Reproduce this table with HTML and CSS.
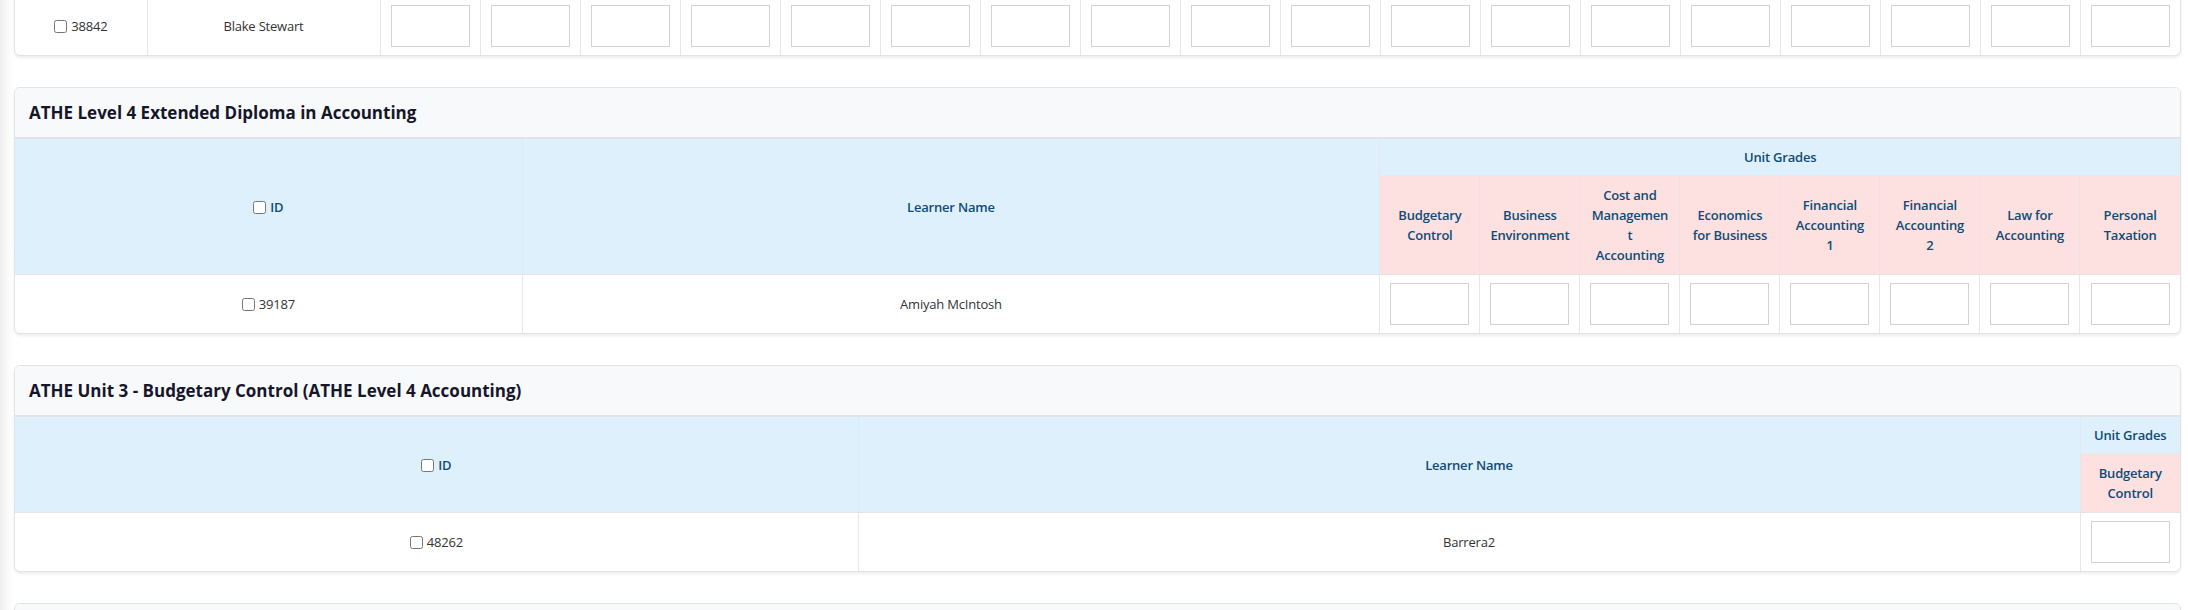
FILE: index.html
```html
<!DOCTYPE html>
<html lang="en">
<head>
<meta charset="utf-8">
<title>Unit Grades</title>
<link rel="stylesheet" href="styles.css">
</head>
<body>
<main class="page">

  <section class="card card-scrolled">
    <table class="grid">
      <colgroup>
        <col class="c-id1"><col class="c-name1">
        <col class="c-unit"><col class="c-unit"><col class="c-unit"><col class="c-unit"><col class="c-unit"><col class="c-unit">
        <col class="c-unit"><col class="c-unit"><col class="c-unit"><col class="c-unit"><col class="c-unit"><col class="c-unit">
        <col class="c-unit"><col class="c-unit"><col class="c-unit"><col class="c-unit"><col class="c-unit"><col class="c-unit">
      </colgroup>
      <tbody>
        <tr>
          <td><label class="idlbl"><input type="checkbox"> 38842</label></td>
          <td>Blake Stewart</td>
          <td class="in"><input class="grade" type="text"></td>
          <td class="in"><input class="grade" type="text"></td>
          <td class="in"><input class="grade" type="text"></td>
          <td class="in"><input class="grade" type="text"></td>
          <td class="in"><input class="grade" type="text"></td>
          <td class="in"><input class="grade" type="text"></td>
          <td class="in"><input class="grade" type="text"></td>
          <td class="in"><input class="grade" type="text"></td>
          <td class="in"><input class="grade" type="text"></td>
          <td class="in"><input class="grade" type="text"></td>
          <td class="in"><input class="grade" type="text"></td>
          <td class="in"><input class="grade" type="text"></td>
          <td class="in"><input class="grade" type="text"></td>
          <td class="in"><input class="grade" type="text"></td>
          <td class="in"><input class="grade" type="text"></td>
          <td class="in"><input class="grade" type="text"></td>
          <td class="in"><input class="grade" type="text"></td>
          <td class="in"><input class="grade" type="text"></td>
        </tr>
      </tbody>
    </table>
  </section>

  <section class="card">
    <header class="card-header">ATHE Level 4 Extended Diploma in Accounting</header>
    <table class="grid">
      <colgroup>
        <col class="c-id2"><col>
        <col class="c-unit"><col class="c-unit"><col class="c-unit"><col class="c-unit">
        <col class="c-unit"><col class="c-unit"><col class="c-unit"><col class="c-unit">
      </colgroup>
      <thead>
        <tr>
          <th rowspan="2"><label class="idlbl"><input type="checkbox"> ID</label></th>
          <th rowspan="2">Learner Name</th>
          <th colspan="8">Unit Grades</th>
        </tr>
        <tr class="units">
          <th>Budgetary<br>Control</th>
          <th>Business<br>Environment</th>
          <th>Cost and<br>Managemen<br>t<br>Accounting</th>
          <th>Economics<br>for Business</th>
          <th>Financial<br>Accounting<br>1</th>
          <th>Financial<br>Accounting<br>2</th>
          <th>Law for<br>Accounting</th>
          <th>Personal<br>Taxation</th>
        </tr>
      </thead>
      <tbody>
        <tr>
          <td><label class="idlbl"><input type="checkbox"> 39187</label></td>
          <td>Amiyah McIntosh</td>
          <td class="in"><input class="grade" type="text"></td>
          <td class="in"><input class="grade" type="text"></td>
          <td class="in"><input class="grade" type="text"></td>
          <td class="in"><input class="grade" type="text"></td>
          <td class="in"><input class="grade" type="text"></td>
          <td class="in"><input class="grade" type="text"></td>
          <td class="in"><input class="grade" type="text"></td>
          <td class="in"><input class="grade" type="text"></td>
        </tr>
      </tbody>
    </table>
  </section>

  <section class="card">
    <header class="card-header">ATHE Unit 3 - Budgetary Control (ATHE Level 4 Accounting)</header>
    <table class="grid">
      <colgroup>
        <col class="c-id3"><col><col class="c-unit">
      </colgroup>
      <thead>
        <tr>
          <th rowspan="2"><label class="idlbl"><input type="checkbox"> ID</label></th>
          <th rowspan="2">Learner Name</th>
          <th>Unit Grades</th>
        </tr>
        <tr class="units">
          <th>Budgetary<br>Control</th>
        </tr>
      </thead>
      <tbody>
        <tr>
          <td><label class="idlbl"><input type="checkbox"> 48262</label></td>
          <td>Barrera2</td>
          <td class="in"><input class="grade" type="text"></td>
        </tr>
      </tbody>
    </table>
  </section>

  <section class="card">
    <header class="card-header"></header>
  </section>

</main>
</body>
</html>
```

FILE: styles.css
```css
* {
  box-sizing: border-box;
}

html, body {
  margin: 0;
  background: #fff;
}

body {
  font-family: "Open Sans", "Noto Sans", sans-serif;
  font-size: 13px;
  letter-spacing: -0.2px;
  color: #333;
  background: linear-gradient(to right, #efefef 0, #fafafa 8px, #fff 14px);
  overflow: hidden;
}

.page {
  padding: 0 7px 0 14px;
}

.card {
  background: #fff;
  border: 1px solid #e2e3e7;
  border-radius: 6px;
  box-shadow: 0 2px 3px rgba(20, 20, 40, 0.07);
  margin-bottom: 31px;
  overflow: hidden;
}

.card-scrolled {
  margin-top: -4px;
  border-top-left-radius: 0;
  border-top-right-radius: 0;
}

.card-header {
  height: 51px;
  display: flex;
  align-items: center;
  padding: 0 14px;
  background: #f8f9fb;
  border-bottom: 2px solid #e3e4e8;
  font-size: 17px;
  font-weight: 700;
  letter-spacing: 0;
  color: #16162a;
}

.grid {
  width: 100%;
  border-collapse: collapse;
  table-layout: fixed;
}

.c-id1 { width: 132px; }
.c-name1 { width: 233px; }
.c-id2 { width: 507px; }
.c-id3 { width: 843px; }
.c-unit { width: 100px; }

.grid th,
.grid td {
  text-align: center;
  vertical-align: middle;
  padding: 8px;
  line-height: 20px;
  border-right: 1px solid #e7e7e9;
}

.grid th:last-child,
.grid td:last-child {
  border-right: 0;
}

.grid thead th {
  background: #dff0fd;
  color: #0f4c75;
  font-weight: 600;
  border-right-color: #e2e8ee;
}

.grid thead tr:first-child th:last-child {
  border-bottom: 1px solid #e3eaf0;
}

.grid thead .units th {
  background: #fde1e1;
  border-right-color: #f0e2e3;
  padding: 9px 4px;
  white-space: nowrap;
}

.grid thead {
  border-bottom: 1px solid #e3e4e8;
}

.grid td.in {
  padding: 8px 0;
}

.grade {
  display: block;
  margin: 0 auto;
  width: 79px;
  height: 42px;
  border: 1px solid #d3d3d6;
  border-radius: 0;
  background: #fff;
  padding: 0 6px;
  font: inherit;
}

.idlbl {
  display: inline;
}

.idlbl input {
  margin: 0 1px 0 0;
  width: 13px;
  height: 13px;
  vertical-align: -2px;
}
```
